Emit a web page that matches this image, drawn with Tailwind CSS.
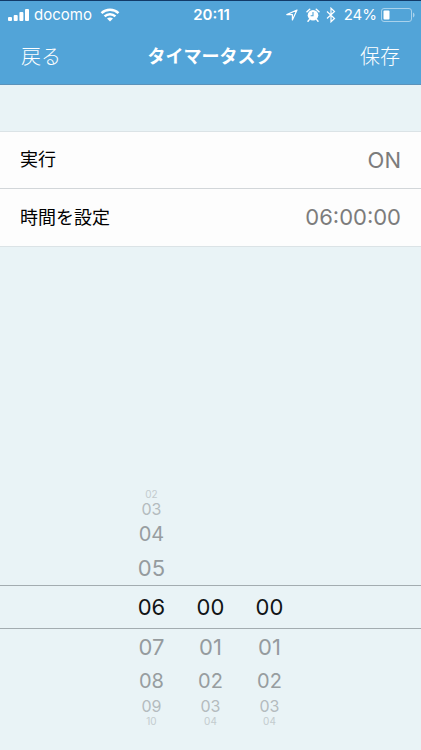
<!DOCTYPE html>
<html lang="ja">
<head>
<meta charset="utf-8">
<meta name="viewport" content="width=device-width, initial-scale=1">
<title>タイマータスク</title>
<script src="https://cdn.jsdelivr.net/npm/@tailwindcss/browser@4"></script>
</head>
<body class="flex min-h-screen flex-col bg-[#e9f3f6] font-['Inter','Noto_Sans_CJK_JP',sans-serif] text-black">
<header class="border-t border-b border-t-[#123a68] border-b-[#5b92ba] bg-[#52a4d8] text-white">
  <div class="grid h-7 grid-cols-[1fr_auto_1fr] items-center pr-1.5 pl-2">
    <div class="flex items-center gap-1">
      <svg class="h-3 w-[22px]" viewBox="0 0 22 12" fill="currentColor" role="img" aria-label="電波"><rect x="0" y="8" width="4" height="4" rx="1"/><rect x="5.700" y="6" width="4" height="6" rx="1"/><rect x="11.400" y="3" width="4" height="9" rx="1"/><rect x="17" y="0" width="4" height="12" rx="1"/></svg>
      <span class="text-[15px] leading-6">docomo</span>
      <svg class="ml-1 h-[14px] w-5" viewBox="0 0 20 14" fill="none" stroke="currentColor" stroke-width="2.500" role="img" aria-label="Wi-Fi"><path d="M1.500 5.200C6.300.700 13.700.700 18.500 5.200"/><path d="M4.600 8.300c3-2.900 7.800-2.900 10.800 0"/><path d="M10 13.500 7 10.500c1.600-1.500 4.400-1.500 6 0z" fill="currentColor" stroke="none"/></svg>
    </div>
    <time class="text-[15px] leading-6 font-semibold">20:11</time>
    <div class="flex items-center justify-end">
      <svg class="h-3 w-3" viewBox="0 0 12 12" fill="none" stroke="currentColor" stroke-width="1.200" stroke-linejoin="round" role="img" aria-label="位置情報"><path d="M11 1 .8 5.600h5.600v5.400z"/></svg>
      <svg class="ml-2 h-[14px] w-[14px]" viewBox="0 0 14 14" role="img" aria-label="アラーム"><circle cx="7" cy="7.300" r="5.300" fill="currentColor"/><path d="M1 3.800 3.700 1.300M13 3.800l-2.700-2.500M3.300 11.600 2 13.200M10.700 11.600l1.300 1.600" stroke="currentColor" stroke-width="1.500" stroke-linecap="round"/><path d="M7 4v3.700H4.600" fill="none" stroke="#52a4d8" stroke-width="1.100"/></svg>
      <svg class="ml-1.5 h-4 w-[10px]" viewBox="0 0 10 16" fill="none" stroke="currentColor" stroke-width="1.200" role="img" aria-label="Bluetooth"><path d="M1 4.500 8.500 11.500 5 14.800V1.200L8.500 4.500 1 11.500"/></svg>
      <span class="ml-2 text-[15px] leading-6">24%</span>
      <svg class="ml-1 h-[14px] w-[34px]" viewBox="0 0 34 14" role="img" aria-label="バッテリー 24%"><rect x=".5" y=".5" width="30" height="13" rx="2.500" fill="none" stroke="#a9d2ec"/><rect x="2.500" y="2.500" width="6" height="9" rx="1" fill="#fff"/><path d="M32 4.500c2 .8 2 4.200 0 5z" fill="#a9d2ec"/></svg>
    </div>
  </div>
  <nav class="grid h-[55px] grid-cols-[1fr_auto_1fr] items-center px-[21px]">
    <button type="button" class="justify-self-start text-xl leading-6 font-light">戻る</button>
    <h1 class="text-lg leading-6 font-bold">タイマータスク</h1>
    <button type="button" class="justify-self-end text-xl leading-6 font-light">保存</button>
  </nav>
</header>
<main class="flex grow flex-col pt-[46px] pb-[23px]">
  <div class="divide-y divide-[#d2d6d9] border-y border-[#dbe3e6] bg-[#fdfdfd]">
    <button type="button" class="flex h-[57px] w-full items-center justify-between px-5">
      <span class="text-lg">実行</span>
      <span class="text-[22px] text-[#7c7c7c]">ON</span>
    </button>
    <button type="button" class="flex h-[57px] w-full items-center justify-between px-5">
      <span class="text-lg">時間を設定</span>
      <span class="text-[22px] text-[#7c7c7c]">06:00:00</span>
    </button>
  </div>
  <section aria-label="時間を設定" class="relative mt-auto flex justify-center">
    <div class="pointer-events-none absolute inset-x-0 top-[98px] h-11 border-y border-[#a3acb0]"></div>
    <div role="listbox" aria-label="時" class="grid w-[59px] grid-rows-[13px_17px_33px_35px_44px_35px_33px_17px_13px] place-items-center leading-none">
      <button type="button" role="option" aria-selected="false" class="text-[10px] text-[#c3cbce]">02</button>
      <button type="button" role="option" aria-selected="false" class="text-base leading-none text-[#b4bbbe]">03</button>
      <button type="button" role="option" aria-selected="false" class="text-xl leading-none text-[#979da0]">04</button>
      <button type="button" role="option" aria-selected="false" class="text-[22px] text-[#959b9e]">05</button>
      <button type="button" role="option" aria-selected="true" class="text-[22px] text-[#111416]">06</button>
      <button type="button" role="option" aria-selected="false" class="text-[22px] text-[#959b9e]">07</button>
      <button type="button" role="option" aria-selected="false" class="text-xl leading-none text-[#979da0]">08</button>
      <button type="button" role="option" aria-selected="false" class="text-base leading-none text-[#b4bbbe]">09</button>
      <button type="button" role="option" aria-selected="false" class="text-[10px] text-[#c3cbce]">10</button>
    </div>
    <div role="listbox" aria-label="分" class="grid w-[59px] grid-rows-[44px_35px_33px_17px_13px] place-items-center pt-[98px] leading-none">
      <button type="button" role="option" aria-selected="true" class="text-[22px] text-[#111416]">00</button>
      <button type="button" role="option" aria-selected="false" class="text-[22px] text-[#959b9e]">01</button>
      <button type="button" role="option" aria-selected="false" class="text-xl leading-none text-[#979da0]">02</button>
      <button type="button" role="option" aria-selected="false" class="text-base leading-none text-[#b4bbbe]">03</button>
      <button type="button" role="option" aria-selected="false" class="text-[10px] text-[#c3cbce]">04</button>
    </div>
    <div role="listbox" aria-label="秒" class="grid w-[59px] grid-rows-[44px_35px_33px_17px_13px] place-items-center pt-[98px] leading-none">
      <button type="button" role="option" aria-selected="true" class="text-[22px] text-[#111416]">00</button>
      <button type="button" role="option" aria-selected="false" class="text-[22px] text-[#959b9e]">01</button>
      <button type="button" role="option" aria-selected="false" class="text-xl leading-none text-[#979da0]">02</button>
      <button type="button" role="option" aria-selected="false" class="text-base leading-none text-[#b4bbbe]">03</button>
      <button type="button" role="option" aria-selected="false" class="text-[10px] text-[#c3cbce]">04</button>
    </div>
  </section>
</main>
</body>
</html>
